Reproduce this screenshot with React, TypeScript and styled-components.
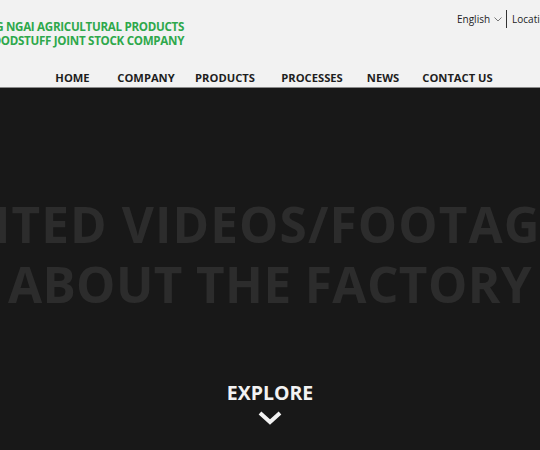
import React from "react";
import styled, { createGlobalStyle } from "styled-components";

const Global = createGlobalStyle`
  html, body { margin: 0; padding: 0; overflow: hidden; }
  body { font-family: "Open Sans", "Liberation Sans", sans-serif; background: #181818; }
`;

const Page = styled.div`
  width: 540px;
  height: 450px;
  overflow: hidden;
  display: flex;
  flex-direction: column;
`;

const Header = styled.header`
  background: #f2f2f2;
  height: 87px;
  border-bottom: 1px solid #8a8a8a;
  display: flex;
  flex-direction: column;
  overflow: hidden;
  flex-shrink: 0;
`;

const Container = styled.div`
  width: 622px;
  margin-left: -42px;
  display: flex;
  justify-content: space-between;
  align-items: flex-start;
`;

const Logo = styled.div`
  padding-top: 20px;
  color: #2ea84b;
  font-weight: 700;
  font-size: 11.6px;
  line-height: 14px;
  letter-spacing: -0.3px;
  white-space: nowrap;
  text-align: right;
`;

const TopLinks = styled.div`
  display: flex;
  align-items: center;
  padding: 10px 0 0 2px;
  font-size: 10px;
  color: #222;
  white-space: nowrap;
  width: 123px;
`;

const Lang = styled.span`
  display: flex;
  align-items: center;
  gap: 4px;
  padding-right: 4px;
  border-right: 1px solid #333;
  height: 18px;
`;

const Loc = styled.span`
  padding-left: 5px;
`;

const Nav = styled.nav`
  display: flex;
  justify-content: center;
  margin-top: 22px;
  padding-left: 3px;
`;

const NavItem = styled.a<{ $w: number }>`
  width: ${(p) => p.$w}px;
  text-align: center;
  font-size: 11.2px;
  font-weight: 700;
  color: #1e1e1e;
  text-decoration: none;
  white-space: nowrap;
  line-height: 16px;
`;

const Hero = styled.section`
  flex: 1;
  background: #181818;
  display: flex;
  flex-direction: column;
  align-items: center;
  overflow: hidden;
`;

const Title = styled.h1`
  margin: 106px 0 0 0;
  display: flex;
  flex-direction: column;
  align-items: center;
  font-size: 49.5px;
  line-height: 60px;
  font-weight: 700;
  color: #2c2c2c;
`;

const Line = styled.span<{ $ls: number; $shift?: number }>`
  display: block;
  white-space: nowrap;
  flex-shrink: 0;
  letter-spacing: ${(p) => p.$ls}px;
  margin-right: ${(p) => (p.$shift ?? 0) * 2}px;
`;

const Explore = styled.div`
  margin-top: 66px;
  display: flex;
  flex-direction: column;
  align-items: center;
  color: #f2f2f2;
  font-size: 19.5px;
  font-weight: 700;
  line-height: 26px;
`;

const Chevron = () => (
  <svg width="24" height="14" viewBox="0 0 24 14" style={{ marginTop: 5 }}>
    <path d="M2 2 L12 11 L22 2" fill="none" stroke="#f2f2f2" strokeWidth="4" strokeLinejoin="miter" />
  </svg>
);

const Caret = () => (
  <svg width="8" height="5" viewBox="0 0 8 5">
    <path d="M0.5 0.5 L4 4 L7.5 0.5" fill="none" stroke="#777" strokeWidth="1" />
  </svg>
);

const navItems: [string, number][] = [
  ["HOME", 72],
  ["COMPANY", 75],
  ["PRODUCTS", 83],
  ["PROCESSES", 91],
  ["NEWS", 51],
  ["CONTACT US", 98],
];

export default function App() {
  return (
    <Page>
      <Global />
      <Header>
        <Container>
          <Logo>
            QUANG NGAI AGRICULTURAL PRODUCTS
            <br />
            AND FOODSTUFF JOINT STOCK COMPANY
          </Logo>
          <TopLinks>
            <Lang>
              English <Caret />
            </Lang>
            <Loc>Location</Loc>
          </TopLinks>
        </Container>
        <Nav>
          {navItems.map(([t, w]) => (
            <NavItem key={t} href="#" $w={w}>
              {t}
            </NavItem>
          ))}
        </Nav>
      </Header>
      <Hero>
        <Title>
          <Line $ls={1.1} $shift={21.5}>EDITED VIDEOS/FOOTAGE</Line>
          <Line $ls={0.4}>ABOUT THE FACTORY</Line>
        </Title>
        <Explore>
          EXPLORE
          <Chevron />
        </Explore>
      </Hero>
    </Page>
  );
}
